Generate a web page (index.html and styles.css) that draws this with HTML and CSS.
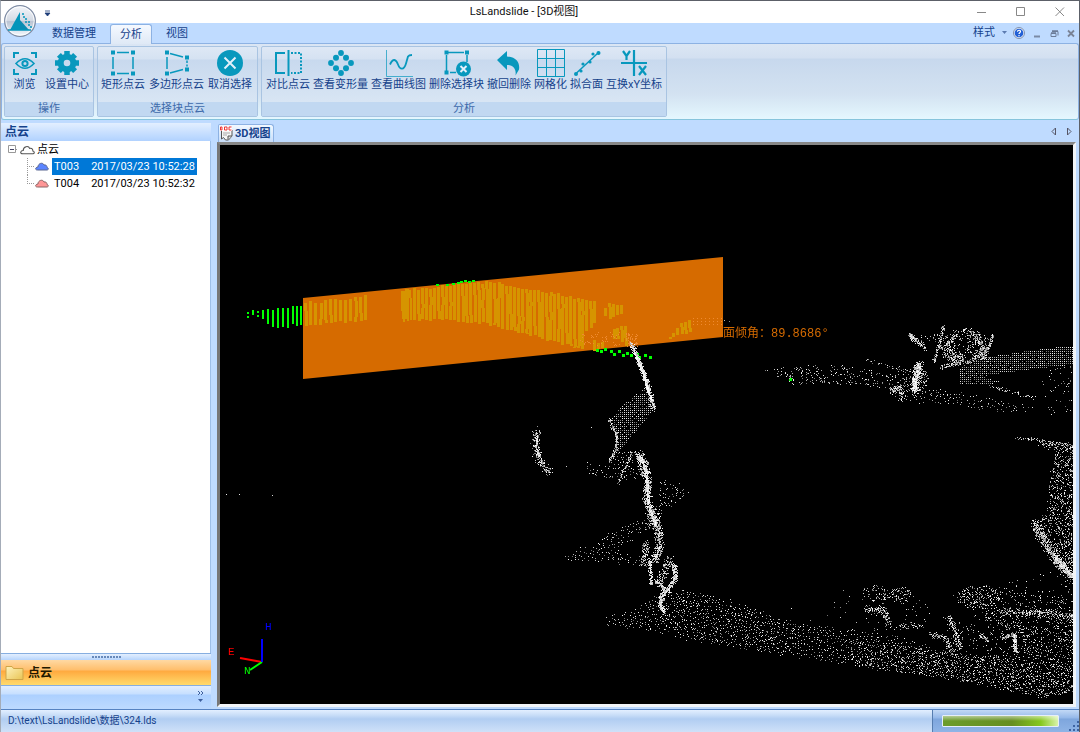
FILE: index.html
```html
<!DOCTYPE html>
<html lang="zh-CN">
<head>
<meta charset="utf-8">
<title>LsLandslide - [3D视图]</title>
<link rel="stylesheet" href="styles.css">
</head>
<body>
<div class="window">
  <header class="titlebar">
    <button class="orb" aria-label="应用程序菜单">
      <svg viewBox="0 0 34 34" width="34" height="34">
        <defs>
          <linearGradient id="orb-fill" x1="0" y1="0" x2="0" y2="1">
            <stop offset="0" stop-color="#f4f6fa"/><stop offset=".48" stop-color="#d5dbe5"/>
            <stop offset=".52" stop-color="#b9c3d2"/><stop offset="1" stop-color="#f5faff"/>
          </linearGradient>
        </defs>
        <circle cx="17" cy="17" r="15.4" fill="url(#orb-fill)" stroke="#7d8ba3" stroke-width="1.2"/>
        <circle cx="17" cy="17" r="14.2" fill="none" stroke="#fff" stroke-opacity=".8"/>
        <path d="M7 26 17 8v18z" fill="#0495ba"/><path d="M17 16l9 10h-9z" fill="#0b8cb2"/>
        <path d="M19 10h2M20 13h2M22 15h2M22 18h2M25 18h2M25 21h2M27 23h2" stroke="#0495ba" stroke-width="1.700"/>
        <path d="M5 26h23" stroke="#0495ba" stroke-width="1.500"/>
      </svg>
    </button>
    <button class="quick" aria-label="自定义快速访问工具栏"><svg width="7" height="7" viewBox="0 0 7 7"><path d="M1 1h5M1 3h5L3.500 6z" fill="#1d3c78" stroke="#1d3c78" stroke-width=".8"/></svg></button>
    <h1 class="title">LsLandslide - [3D视图]</h1>
    <div class="winbtns">
      <button aria-label="最小化"><svg width="10" height="10"><path d="M0 5.500h9" stroke="#888"/></svg></button>
      <button aria-label="最大化"><svg width="10" height="10"><path d="M.5.500h8v8h-8z" fill="none" stroke="#888"/></svg></button>
      <button aria-label="关闭"><svg width="10" height="10"><path d="M.5.500l8.500 8.500M9 .5L.5 9" stroke="#888"/></svg></button>
    </div>
  </header>

  <nav class="tabs">
    <button class="tab">数据管理</button>
    <button class="tab active">分析</button>
    <button class="tab">视图</button>
    <div class="tabtools">
      <button class="style-btn">样式 <svg width="7" height="4"><path d="M1 0h5L3.500 3z" fill="#5c7bb0"/></svg></button>
      <button aria-label="帮助"><svg width="12" height="12" viewBox="0 0 12 12"><circle cx="6" cy="6" r="5.500" fill="#e4eefb" stroke="#8090ad"/><circle cx="6" cy="6" r="4.300" fill="#2260d6"/><path d="M4.500 4.800c0-2 3-2 3-.2 0 1.200-1.500 1-1.500 2.400M6 8v1.200" fill="none" stroke="#fff" stroke-width="1.200"/></svg></button>
      <button class="mdi" aria-label="最小化子窗口"><svg width="9" height="9"><path d="M1 7.500h6" stroke="#7a8aa5" stroke-width="2"/></svg></button>
      <button class="mdi" aria-label="还原子窗口"><svg width="9" height="9"><path d="M2 2.500h6v4M1 4.500h5v3H1z" fill="none" stroke="#6c7c98"/><path d="M2 2h6M1 4h5" stroke="#6c7c98" stroke-width="1.500"/></svg></button>
      <button class="mdi" aria-label="关闭子窗口"><svg width="9" height="9"><path d="M1 1.500l6 6M7 1.500l-6 6" stroke="#7a8396" stroke-width="1.800"/></svg></button>
    </div>
  </nav>

  <section class="ribbon">
    <div class="group first">
      <div class="tools">
        <button class="tool"><svg class="ico" viewBox="0 0 28 28"><path d="M3 9V4h5M20 4h5v5M25 20v5h-5M8 25H3v-5" stroke-width="2"/><path d="M5 14.500q9-9.500 18 0-9 9.500-18 0z" stroke-width="1.600"/><circle cx="14" cy="14.500" r="2.600" stroke-width="2"/></svg><span>浏览</span></button>
        <button class="tool"><svg class="ico" viewBox="0 0 28 28"><circle cx="14" cy="14" r="6.300" stroke-width="6"/><g stroke-width="5.500"><path d="M14 2v5M14 21v5M2 14h5M21 14h5M5.900 5.900l3 3M19.100 19.100l3 3M5.900 22.100l3-3M19.100 8.900l3-3"/></g></svg><span>设置中心</span></button>
      </div>
      <div class="caption">操作</div>
    </div>
    <div class="group second">
      <div class="tools">
        <button class="tool"><svg class="ico" viewBox="0 0 28 28"><path d="M8 3.500h12M8 24.500h12M4 8v12M24 8v12"/><path class="f" d="M2 1.500h4v4H2zM22 1.500h4v4h-4zM2 22.500h4v4H2zM22 22.500h4v4h-4z"/></svg><span>矩形点云</span></button>
        <button class="tool"><svg class="ico" viewBox="0 0 28 28"><path d="M7 4.500l13 3.500M7 24l13-3.500M4 8v12M24 11.500v2.500M24 15.500v2"/><path class="f" d="M2 1.500h4v4H2zM22 6.500h4v4h-4zM2 22.500h4v4H2zM22 18.500h4v4h-4z"/></svg><span>多边形点云</span></button>
        <button class="tool"><svg class="ico" viewBox="0 0 28 28"><circle class="f" cx="14" cy="14" r="13"/><path class="cut" d="M8.500 8.500l11 11M19.500 8.500l-11 11"/></svg><span>取消选择</span></button>
      </div>
      <div class="caption">选择块点云</div>
    </div>
    <div class="group third">
      <div class="tools">
        <button class="tool"><svg class="ico" viewBox="0 0 28 28"><path d="M11 4H2v20h9" stroke-width="2"/><path d="M14.500 1v26" stroke-width="2"/><path d="M17 4h10v20H17" stroke-width="2" stroke-dasharray="2 1.500"/></svg><span>对比点云</span></button>
        <button class="tool"><svg class="ico" viewBox="0 0 28 28"><g class="f"><circle cx="14" cy="4" r="2.900"/><circle cx="9" cy="8.800" r="3"/><circle cx="19" cy="8.800" r="3"/><circle cx="4" cy="14" r="2.900"/><circle cx="24" cy="14" r="2.900"/><circle cx="9" cy="19.200" r="3"/><circle cx="19" cy="19.200" r="3"/><circle cx="14" cy="24" r="2.900"/></g></svg><span>查看变形量</span></button>
        <button class="tool"><svg class="ico" viewBox="0 0 28 28"><path d="M1.500 1v26.500H28" stroke-width="1" opacity=".7"/><path d="M5 15.500c3-6.500 6-5.500 8 0s6 6 8-1l2-7q1-1.500 4-1.500" stroke-width="1.800"/></svg><span>查看曲线图</span></button>
        <button class="tool"><svg class="ico" viewBox="0 0 28 28"><path d="M5 3.500h16M3.500 6v16M24 6v7M7 23.500h6"/><path class="f" d="M1.500 1.500h4v4h-4zM22 1.500h4v4h-4zM1.500 21.500h4v4h-4z"/><circle class="f" cx="20.500" cy="20" r="7.500"/><path class="cut" d="M17.500 17l6 6M23.500 17l-6 6"/></svg><span>删除选择块</span></button>
        <button class="tool"><svg class="ico" viewBox="0 0 28 28"><path class="f" d="M2 11L12 2v5.500c10 .5 13 7 12 13l-3.500 6c1-6-2-10.500-8.500-10.500v5z"/></svg><span>撤回删除</span></button>
        <button class="tool"><svg class="ico" viewBox="0 0 28 28"><path d="M.5.500h27v27H.5zM.5 9.500h27M.5 18.500h27M9.500.500v27M18.500.500v27" stroke-width="1"/></svg><span>网格化</span></button>
        <button class="tool"><svg class="ico" viewBox="0 0 28 28"><path d="M3 24.500L25 4"/><g class="f"><circle cx="3" cy="25" r="2"/><circle cx="8" cy="22" r="1.600"/><circle cx="10" cy="15" r="1.600"/><circle cx="17" cy="13" r="1.600"/><circle cx="20" cy="5" r="1.600"/><circle cx="25.500" cy="4" r="2"/></g></svg><span>拟合面</span></button>
        <button class="tool"><svg class="ico" viewBox="0 0 28 28"><path d="M14 1v26M1 14h26M3 2l3.500 5L10 2M6.500 7v4M19 17l7 9M26 17l-7 9" stroke-width="2.200"/></svg><span>互换xY坐标</span></button>
      </div>
      <div class="caption">分析</div>
    </div>
  </section>

  <main class="main">
    <aside class="side">
      <h2 class="sidehead">点云</h2>
      <div class="tree">
        <div class="row root">
          <svg width="11" height="9"><path d="M1.500.500h7v7h-7z" fill="#fff" stroke="#999"/><path d="M3 4.500h4" stroke="#446"/><path d="M9 4.500h2" stroke="#999" stroke-dasharray="1 1"/></svg>
          <svg class="cloud" viewBox="0 0 14 9"><path d="M2.500 8C-.5 8 .5 5 3 5c0-4 5-5 6-2 3-.5 3 2 3 2.500 2 .5 1.500 2.500 0 2.500z" fill="#fff" stroke="#555"/></svg>
          <span>点云</span>
        </div>
        <div class="row leaf">
          <svg class="branch" width="8" height="17"><path d="M.5 0v17M0 8.500h8" stroke="#999" stroke-dasharray="1 1"/></svg>
          <svg class="cloud" viewBox="0 0 14 9"><path d="M2.500 8C-.5 8 .5 5 3 5c0-4 5-5 6-2 3-.5 3 2 3 2.500 2 .5 1.500 2.500 0 2.500z" fill="#5c85ff" stroke="#5a6690"/></svg>
          <span class="item selected"><b>T003</b><time>2017/03/23 10:52:28</time></span>
        </div>
        <div class="row leaf">
          <svg class="branch" width="8" height="17"><path d="M.5 0v9M0 8.500h8" stroke="#999" stroke-dasharray="1 1"/></svg>
          <svg class="cloud" viewBox="0 0 14 9"><path d="M2.500 8C-.5 8 .5 5 3 5c0-4 5-5 6-2 3-.5 3 2 3 2.500 2 .5 1.500 2.500 0 2.500z" fill="#ff9696" stroke="#8a6464"/></svg>
          <span class="item"><b>T004</b><time>2017/03/23 10:52:32</time></span>
        </div>
      </div>
      <div class="grip"><i></i></div>
      <button class="navbtn">
        <svg width="20" height="16" viewBox="0 0 20 16"><defs><linearGradient id="folder" x1="0" y1="0" x2="1" y2="1"><stop offset="0" stop-color="#fff3bd"/><stop offset="1" stop-color="#e9c453"/></linearGradient></defs><path d="M1 1.500h6l1.500 2H18v11H1z" fill="url(#folder)" stroke="#cfa548"/></svg>
        <span>点云</span>
      </button>
      <div class="overflow"><button aria-label="配置按钮"><svg width="8" height="12"><path d="M1 1l2 2-2 2M4 1l2 2-2 2" fill="none" stroke="#3d5f9d"/><path d="M1 9h5L3.500 12z" fill="#3d5f9d"/></svg></button></div>
    </aside>

    <section class="doc">
      <div class="doctabs">
        <button class="doctab">
          <svg width="14" height="15" viewBox="0 0 14 15"><path d="M2.500 4v9l2-1.500 2 2.500h3l3.500-4V4" fill="#f6f6f6" stroke="#555"/><path d="M9 13.500V10h4" fill="#ddd" stroke="#555"/><path d="M1 1h12v4H1z" fill="#fff"/><path d="M1.500 1v3h1.500V1zM5.500 1v3H8V1zM12.500 1H10v3h2.500" fill="none" stroke="#e33"/><path d="M4 7h7M4 9h4" stroke="#aaa"/></svg>
          <span>3D视图</span>
        </button>
        <div class="arrows">
          <button aria-label="上一个"><svg width="6" height="9"><path d="M4.500 1v7L1 4.500z" fill="none" stroke="#556"/></svg></button>
          <button aria-label="下一个"><svg width="6" height="9"><path d="M1.500 1v7L5 4.500z" fill="none" stroke="#556"/></svg></button>
        </div>
      </div>
      <div class="frame">
        <div class="scene">
          <canvas id="cloud"></canvas>
          <span class="mark dip">面倾角：89.8686°</span>
          <span class="mark axis-h">H</span>
          <span class="mark axis-e">E</span>
          <span class="mark axis-n">N</span>
        </div>
      </div>
    </section>
  </main>

  <footer class="status">
    <div class="path">D:\text\LsLandslide\数据\324.lds</div>
    <div class="meter"><div class="bar" role="progressbar" aria-label="进度"></div>
      <svg class="sizer" width="10" height="10"><path d="M8 0h2v2H8zM4 4h2v2H4zM8 4h2v2H8zM0 8h2v2H0zM4 8h2v2H4zM8 8h2v2H8z" fill="#3e64a3"/></svg></div>
  </footer>
</div>
<script src="cloud.js"></script>
</body>
</html>
```
FILE: styles.css
```css
* { box-sizing: border-box; }
body {
  margin: 0;
  font: 11px/16px Roboto, "Noto Sans CJK SC", sans-serif;
  color: #15428b;
}
button {
  margin: 0;
  padding: 0;
  border: 0;
  background: none;
  font: inherit;
  color: inherit;
}
svg { display: block; flex: none; }
h1, h2 { margin: 0; font: inherit; }

.window {
  display: flex;
  flex-direction: column;
  height: 100vh;
  border: 1px solid #5c6068;
  border-bottom: 0;
  border-left-color: #a4acb8;
  background: #bfdbff;
  overflow: hidden;
}

/* Title bar */
.titlebar {
  position: relative;
  display: flex;
  align-items: center;
  flex: none;
  height: 22px;
  background: #fff;
}
.orb { position: absolute; left: 2px; top: 3px; z-index: 2; }
.quick { position: absolute; left: 43px; top: 9px; }
.title { flex: 1; text-align: center; color: #111; padding-left: 70px; }
.winbtns { display: flex; gap: 29px; padding-right: 14px; }

/* Ribbon tabs */
.tabs {
  display: flex;
  align-items: flex-end;
  flex: none;
  height: 20px;
  padding-left: 42px;
  background: #bfdbff;
}
.tab { height: 19px; padding: 0 9px; }
.tab.active {
  margin: 0 5px;
  height: 20px;
  position: relative;
  z-index: 1;
  margin-bottom: -1px;
  border: 1px solid #8db2e3;
  border-bottom: 0;
  border-radius: 3px 3px 0 0;
  background: linear-gradient(#f5f9ff, #dfe9f6);
}
.tabtools {
  display: flex;
  align-items: center;
  gap: 8px;
  height: 20px;
  margin-left: auto;
  padding-right: 3px;
}
.style-btn { display: flex; align-items: center; gap: 6px; margin-right: -3px; }

/* Ribbon */
.ribbon {
  display: flex;
  gap: 3px;
  flex: none;
  height: 77px;
  padding: 2px;
  border: 1px solid #8db2e3;
  border-bottom-color: #86c4dc;
  border-radius: 3px;
  background: linear-gradient(#dbe6f4 0, #d3e0f1 14px, #c7d8ed 15px, #d3e2f1 50px, #e5f8ff 76px);
}
.group {
  display: flex;
  flex-direction: column;
  border: 1px solid #a9c4e2;
  border-radius: 2px;
  background: linear-gradient(#dee8f5 0, #d5e2f2 12px, #c8d9ee 13px, #d9e6f4 57px);
}
.tools { display: flex; flex: 1; padding: 2px 3px 0 2px; }
.first .tools, .second .tools { gap: 2px; }
.second .tools { padding-right: 4px; }
.third .tools { gap: 1px; padding-left: 3px; }
.tool {
  display: flex;
  flex-direction: column;
  align-items: center;
  padding: 0 1px;
  min-width: 35px;
  white-space: nowrap;
}
.ico {
  width: 28px;
  height: 28px;
  fill: none;
  stroke: #0898bd;
  stroke-width: 1.5px;
}
.ico .f { fill: #0898bd; stroke: none; }
.ico .cut { stroke: #e3effa; stroke-width: 2px; }
.caption {
  height: 14px;
  line-height: 14px;
  text-align: center;
  color: #3e6aaa;
  background: #c1d8f1;
}

/* Main area */
.main { display: flex; flex: 1; min-height: 0; gap: 6px; }
.side {
  display: flex;
  flex-direction: column;
  flex: none;
  width: 210px;
  padding-top: 3px;
}
.sidehead {
  height: 18px;
  padding-left: 4px;
  font-size: 12px;
  line-height: 18px;
  font-weight: bold;
  background: linear-gradient(#e3efff, #b1d2ff);
}
.tree { flex: 1; background: #fff; color: #000; border-right: 1px solid #9ebfe8; }
.row { display: flex; align-items: center; height: 17px; }
.root { padding-left: 6px; gap: 2px; }
.leaf { padding-left: 26px; }
.cloud { width: 14px; height: 9px; }
.root .cloud { width: 15px; height: 10px; }
.leaf .cloud { margin-right: 3px; }
.item { display: flex; gap: 12px; padding: 0 2px; line-height: 17px; }
.item b { font-weight: normal; }
.selected { background: #0078d7; color: #fff; }
.grip {
  display: flex;
  justify-content: center;
  align-items: center;
  height: 7px;
  border-top: 1px solid #86aee0;
  background: linear-gradient(#e3efff, #b8d5fc);
}
.grip i { width: 29px; height: 2px; background: repeating-linear-gradient(90deg, #6789ba 0 2px, transparent 2px 3px); }
.navbtn {
  display: flex;
  align-items: center;
  gap: 3px;
  height: 26px;
  padding-left: 4px;
  border-bottom: 1px solid #86aee0;
  background: linear-gradient(#ffd9a3 0, #ffbe6b 10px, #ffa93f 11px, #ffda6c 25px);
  color: #201800;
  font-size: 12px;
  font-weight: bold;
}
.overflow {
  display: flex;
  justify-content: flex-end;
  align-items: flex-start;
  height: 23px;
  padding: 4px 6px;
  background: linear-gradient(#e1eeff 0, #c6dfff 8px, #acd0ff 9px, #bddaff);
}

/* Document area */
.doc { display: flex; flex-direction: column; flex: 1; min-width: 0; padding-right: 3px; }
.doctabs { display: flex; justify-content: space-between; align-items: flex-end; height: 22px; padding-left: 1px; }
.doctab {
  display: flex;
  align-items: center;
  gap: 2px;
  height: 18px;
  padding: 0 3px 0 0;
  border: 1px solid #8db2e3;
  border-bottom: 0;
  border-radius: 2px 3px 0 0;
  background: linear-gradient(#f2f8ff, #c8defa);
  font-weight: bold;
}
.arrows { display: flex; gap: 9px; padding: 0 4px 6px 0; }
.frame {
  display: flex;
  flex: 1;
  min-height: 0;
  margin-bottom: 2px;
  border: 3px solid;
  border-color: #888 #f1f4f7 #f1f4f7 #777;
}
.scene { position: relative; flex: 1; background: #000; overflow: hidden; }
.scene canvas { position: absolute; inset: 0; width: 100%; height: 100%; }
.mark {
  position: absolute;
  font: 12px/14px "Liberation Mono", "Noto Sans CJK SC", monospace;
  white-space: nowrap;
}
.dip { left: 503px; top: 182px; color: #d66b00; }
.axis-h { left: 45px; top: 475px; color: #00f; font-size: 11px; }
.axis-e { left: 8px; top: 500px; color: #f00; font-size: 11px; }
.axis-n { left: 24px; top: 519px; color: #0f0; font-size: 11px; }

/* Status bar */
.status {
  display: flex;
  flex: none;
  height: 23px;
  border-top: 1px solid #5683c2;
  font-size: 10px;
  line-height: 22px;
}
.path {
  flex: 1;
  padding-left: 7px;
  border-right: 1px solid #567db0;
  background: linear-gradient(#e3efff 0, #c9def8 5px, #b1cdf2 9px, #cfe1f8 22px);
}
.meter {
  position: relative;
  display: flex;
  align-items: center;
  width: 146px;
  padding-left: 9px;
  background: linear-gradient(#c3d9f6 0, #94b8e9 8px, #7ea6dd 9px, #8fb4e6);
}
.bar {
  width: 117px;
  height: 12px;
  border: 1px solid #e6eefa;
  border-radius: 1px;
  background: linear-gradient(rgba(255,255,255,.5), rgba(255,255,255,.1) 4px, transparent 5px), linear-gradient(90deg, #6c9c2c 0, #668e20 60%, #86c81e 85%, #d9f3aa);
}
.sizer { position: absolute; right: 0; bottom: 1px; }
```
FILE: cloud.js
```js
const canvas = document.getElementById('cloud');
canvas.width = canvas.clientWidth;
canvas.height = canvas.clientHeight;
const g = canvas.getContext('2d');
g.translate(-220, -145);

let seed = 20170323;
function rnd() {
  seed = (seed * 1664525 + 1013904223) % 4294967296;
  return seed / 4294967296;
}
function dot(x, y, bright) {
  const v = Math.round((bright || 105) + rnd() * (255 - (bright || 105)));
  g.fillStyle = `rgb(${v},${v},${v})`;
  g.fillRect(Math.round(x), Math.round(y), 1, 1);
}
function inside(p, x, y) {
  let hit = false;
  for (let i = 0, j = p.length - 1; i < p.length; j = i++) {
    const [xi, yi] = p[i], [xj, yj] = p[j];
    if ((yi > y) !== (yj > y) && x < (xj - xi) * (y - yi) / (yj - yi) + xi) hit = !hit;
  }
  return hit;
}
function bounds(p) {
  const xs = p.map(q => q[0]), ys = p.map(q => q[1]);
  return [Math.min(...xs), Math.min(...ys), Math.max(...xs), Math.max(...ys)];
}
// Random points with a given density per pixel.
function area(p, density) {
  const [a, b, c, d] = bounds(p);
  const n = (c - a) * (d - b) * density;
  for (let i = 0; i < n; i++) {
    const x = a + rnd() * (c - a), y = b + rnd() * (d - b);
    if (inside(p, x, y)) dot(x, y);
  }
}
// Regular scan rows with some jitter.
function mesh(p, sx, sy, jitter, keep) {
  const [a, b, c, d] = bounds(p);
  for (let x = a; x < c; x += sx) for (let y = b; y < d; y += sy) {
    if (inside(p, x, y) && rnd() < keep) dot(x + (rnd() - .5) * jitter, y + (rnd() - .5) * jitter);
  }
}
// Points spread about a polyline.
function trail(p, spread, perPixel, bright) {
  for (let i = 1; i < p.length; i++) {
    const [x0, y0] = p[i - 1], [x1, y1] = p[i];
    const n = Math.hypot(x1 - x0, y1 - y0) * perPixel;
    for (let k = 0; k < n; k++) {
      const t = rnd();
      dot(x0 + (x1 - x0) * t + (rnd() + rnd() - 1) * spread, y0 + (y1 - y0) * t + (rnd() + rnd() - 1) * spread, bright);
    }
  }
}
function blob(x, y, rx, ry, n) {
  for (let i = 0; i < n; i++) {
    const r = Math.sqrt(rnd()), t = rnd() * 6.283;
    dot(x + rx * r * Math.cos(t), y + ry * r * Math.sin(t));
  }
}
function level(p, x) {
  for (let i = 1; i < p.length; i++) if (x <= p[i][0]) {
    const [x0, y0] = p[i - 1], [x1, y1] = p[i];
    return y0 + (y1 - y0) * (x - x0) / (x1 - x0);
  }
  return p[p.length - 1][1];
}
function stripes(from, to, step, width, upper, lower) {
  for (let x = from; x < to; x += step) {
    const y = Math.round(level(upper, x) + rnd() * 3), e = Math.round(level(lower, x) + rnd() * 3);
    let shift = 0;
    for (let k = y; k < e; k += 4) {
      if (rnd() < .12) shift = 1 - shift;
      g.fillRect(x + shift, k, width, Math.min(4, e - k));
    }
  }
}

// Fitted plane
g.fillStyle = '#d66b00';
g.beginPath();
g.moveTo(303, 298); g.lineTo(723, 257); g.lineTo(723, 337); g.lineTo(303, 379);
g.fill();

// Selected points in front of the plane
g.fillStyle = '#d69400';
stripes(304, 368, 5, 3, [[303, 302], [368, 294]], [[303, 325], [368, 318]]);
const crest = [[401, 289], [440, 285], [465, 282], [490, 281], [530, 288], [595, 300]];
const foot = [[401, 319], [450, 318], [490, 323], [530, 334], [560, 342], [582, 348], [584, 332], [595, 318]];
stripes(401, 411, 2, 2, crest, foot);
stripes(413, 595, 4, 3, crest, foot);
stripes(604, 624, 4, 3, [[602, 310], [608, 302], [624, 304]], [[602, 315], [610, 317], [624, 312]]);
stripes(612, 625, 4, 3, [[612, 328], [625, 323]], [[612, 337], [625, 344]]);
stripes(593, 604, 4, 3, [[593, 338], [604, 344]], [[593, 348], [604, 347]]);
stripes(668, 692, 4, 3, [[668, 336], [680, 322], [692, 316]], [[668, 337], [680, 333], [692, 330]]);
g.fillStyle = '#ef8a30';
for (let x = 693; x < 723; x += 4) for (let y = 318; y < 326; y += 3) g.fillRect(x, y, 1, 1);
for (let i = 0; i < 50; i++) g.fillRect(580 + Math.floor(rnd() * 40), 332 + Math.floor(rnd() * 14), 1, 1);
for (let i = 0; i < 55; i++) g.fillRect(626 + Math.floor(rnd() * 12), 333 + Math.floor(rnd() * 14), 1, 1);

// Selected points outside the plane
g.fillStyle = '#0f0';
[[247, 312, 2], [247, 316, 2], [252, 310, 5], [257, 311, 2], [257, 315, 2], [262, 310, 9], [267, 309, 15],
 [272, 310, 17], [277, 308, 20], [282, 308, 19], [287, 308, 20], [292, 306, 18], [296, 306, 20], [300, 306, 19]]
  .forEach(([x, y, h]) => g.fillRect(x, y, 2, h));
[[436, 284], [446, 284], [452, 283], [457, 282], [460, 281], [464, 280], [468, 281], [472, 280]]
  .forEach(([x, y]) => g.fillRect(x, y, 3, 2));
[[596, 349], [600, 350], [604, 348], [610, 350], [613, 353], [618, 350], [622, 354], [626, 352], [630, 354],
 [636, 353], [638, 356], [644, 354], [649, 356], [789, 378]].forEach(([x, y]) => g.fillRect(x, y, 3, 3));

// Pole and the sheet beneath
trail([[631, 344], [637, 357], [644, 375], [650, 394], [653, 409]], 3, 7, 170);
trail([[634, 352], [643, 374], [651, 400]], 1, 5, 235);
mesh([[646, 386], [653, 410], [638, 428], [615, 455], [616, 435], [610, 420], [622, 405]], 2, 2, 1, .85);
trail([[609, 419], [616, 434], [616, 448], [610, 460]], 2, 4, 120);
mesh([[616, 451], [630, 448], [642, 472], [638, 480], [622, 480], [606, 478], [588, 474], [588, 460], [600, 466]], 3, 3, 3, .75);
trail([[632, 452], [617, 484]], 2, 2);
trail([[636, 452], [642, 476]], 2, 3);

// Left arc
trail([[537, 430], [534, 442], [537, 456], [545, 468], [552, 473]], 5, 4);
trail([[537, 433], [536, 448], [541, 459]], 1, 3, 180);

// Central trunk
trail([[637, 453], [644, 463], [648, 482], [646, 500], [653, 516], [658, 530], [659, 548], [654, 562]], 5, 7, 130);
trail([[639, 456], [645, 467], [647, 485], [648, 503], [655, 524]], 2, 6, 210);
mesh([[657, 478], [676, 482], [690, 493], [674, 505], [660, 510]], 3, 3, 3, .75);
area([[645, 505], [661, 505], [660, 528], [645, 530]], .3);
mesh([[645, 518], [645, 533], [612, 549], [648, 560], [646, 568], [600, 561], [566, 562], [566, 555], [578, 544], [590, 550], [604, 533]], 3, 3, 3, .7);
trail([[646, 542], [643, 565]], 4, 4);
trail([[649, 558], [651, 584]], 2, 5, 180);
trail([[669, 558], [663, 572], [660, 584]], 5, 4);
trail([[674, 565], [675, 578], [668, 589], [661, 596], [660, 604], [664, 612]], 3, 9, 180);
trail([[655, 580], [665, 590]], 3, 5, 160);

// Ground band
mesh([[606, 616], [640, 608], [650, 598], [672, 588], [710, 594], [745, 605], [792, 622], [850, 629], [900, 636],
      [938, 650], [970, 657], [1010, 657], [1024, 640], [1073, 638], [1073, 692], [1042, 697], [1000, 688],
      [930, 676], [860, 667], [790, 656], [700, 642], [640, 629], [606, 625]], 3, 3, 3, .8);
area([[850, 640], [1073, 665], [1073, 692], [1042, 697], [930, 676], [850, 665]], .12);
area([[660, 592], [740, 606], [800, 626], [800, 655], [700, 640], [660, 628]], .04);

// Rubble on the right
area([[948, 595], [985, 583], [1025, 592], [1073, 600], [1073, 642], [1020, 640], [990, 620]], .09);
area([[940, 615], [1073, 610], [1073, 660], [950, 655]], .05);
area([[1000, 585], [1073, 560], [1073, 640]], .03);
blob(978, 597, 22, 12, 150);
trail([[1000, 610], [1022, 612], [1050, 612], [1073, 617]], 4, 3);
trail([[948, 616], [954, 628], [960, 648]], 4, 4);
trail([[930, 633], [945, 638], [952, 652]], 4, 4);
trail([[1014, 634], [1015, 652]], 2, 8, 180);
trail([[1001, 637], [1014, 634]], 3, 5);
trail([[980, 634], [988, 640]], 3, 4);
blob(875, 593, 14, 8, 65);
blob(901, 595, 12, 9, 75);
trail([[865, 608], [875, 611], [882, 608], [890, 625]], 4, 4);
trail([[898, 626], [922, 625]], 4, 2);
blob(880, 612, 55, 20, 45);

// Right wall
area([[1057, 447], [1073, 447], [1073, 577], [1052, 556], [1034, 535], [1033, 522], [1045, 512], [1050, 473]], .23);
trail([[1034, 523], [1046, 544], [1058, 562], [1073, 578]], 6, 8, 120);
trail([[1052, 553], [1073, 577]], 3, 6, 190);
trail([[1015, 438], [1035, 439], [1073, 446]], 2, 1.3);
trail([[1040, 443], [1073, 447]], 5, 3);

// Structures at the upper right
mesh([[984, 357], [1030, 350], [1073, 345], [1073, 364], [1030, 369], [984, 375]], 2, 2, 1, .95);
mesh([[960, 366], [988, 355], [988, 378], [1002, 382], [984, 384], [960, 384]], 2, 2, 1, .9);
mesh([[890, 389], [930, 387], [985, 397], [1036, 408], [1034, 414], [985, 410], [930, 403], [895, 400]], 3, 3, 3, .75);
area([[763, 369], [830, 362], [900, 374], [900, 388], [830, 384], [795, 385]], .1);
trail([[865, 359], [905, 371]], 3, .7);
trail([[990, 386], [1035, 398]], 3, 1);
area([[1040, 370], [1073, 365], [1073, 415], [1048, 415]], .035);
trail([[909, 334], [925, 348]], 3, 7, 130);
trail([[943, 325], [940, 340], [937, 350], [933, 362]], 2, 3);
trail([[993, 334], [987, 350], [982, 358]], 2, 4);
trail([[941, 346], [946, 356], [956, 361], [970, 362], [982, 352]], 3, 3);
blob(966, 345, 25, 17, 230);
trail([[966, 330], [980, 340], [985, 357]], 5, 5);
trail([[955, 335], [947, 344], [951, 355], [962, 356]], 3, 3);
blob(930, 337, 16, 5, 22);
trail([[940, 368], [960, 362]], 3, 4);
trail([[919, 363], [917, 375], [914, 391]], 5, 12, 160);
trail([[915, 371], [914, 390]], 3, 7, 220);
blob(915, 379, 13, 13, 140);
trail([[890, 390], [901, 386], [901, 399]], 4, 5);

[[226, 494], [239, 494], [272, 495], [566, 466], [591, 427], [724, 320], [729, 321], [791, 608], [843, 590], [840, 607], [810, 620]]
  .forEach(([x, y]) => dot(x, y, 130));

// Axes
function axis(color, x, y) {
  g.strokeStyle = color;
  g.lineWidth = 2;
  g.beginPath(); g.moveTo(262, 662); g.lineTo(x, y); g.stroke();
}
axis('#f00', 240, 658);
axis('#0f0', 250, 670);
axis('#00f', 262, 639);
```
